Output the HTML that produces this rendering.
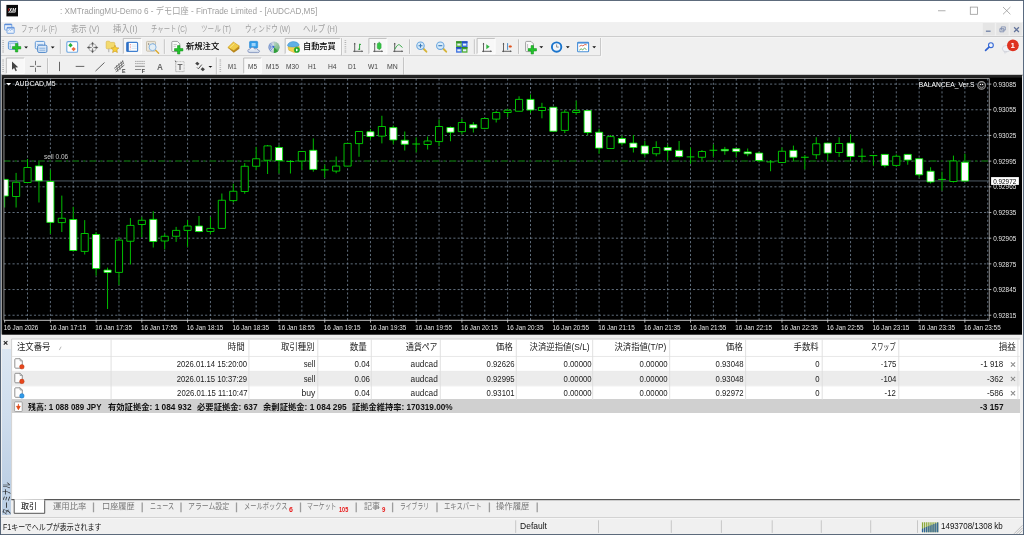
<!DOCTYPE html>
<html lang="ja"><head><meta charset="utf-8"><title>XMTradingMU-Demo 6</title>
<style>
html,body{margin:0;padding:0}
body{width:1024px;height:535px;overflow:hidden;background:#f0f0f0;position:relative;
 font-family:"Liberation Sans","Noto Sans CJK JP",sans-serif;font-size:8.5px;color:#000}
.a{position:absolute}
.t{position:absolute;white-space:nowrap;line-height:1}
</style></head><body><div id="win" style="position:absolute;left:0;top:0;width:1024px;height:535px;will-change:transform">
<svg width="1024" height="76" viewBox="0 0 1024 76" style="position:absolute;left:0;top:0">
<rect x="0" y="0" width="1024" height="22.3" fill="#fff"/>
<rect x="6.4" y="4.9" width="11.6" height="11.5" fill="#0a0a0a"/>
<path d="M8.5 8.3h1l-.5 2.4h-1z" fill="#d81818"/>
<text x="9.1" y="11.5" font-family="Liberation Sans, sans-serif" font-weight="bold" font-style="italic" font-size="5" fill="#fff" textLength="6.9" lengthAdjust="spacingAndGlyphs">XM</text>
<path d="M8.2 12.25h7.2" stroke="#c8c8c8" stroke-width="0.9"/>
<path d="M938 10.75h7.5" stroke="#9a9a9a" stroke-width="0.8"/>
<rect x="970.3" y="7.1" width="7.2" height="7.2" fill="none" stroke="#9a9a9a" stroke-width="0.8"/>
<path d="M1003 7l7.4 7.3M1010.4 7l-7.4 7.3" stroke="#9a9a9a" stroke-width="0.8"/>
<rect x="0" y="22.3" width="1024" height="14" fill="#f0f0f0"/>
<rect x="4.6" y="24" width="7.2" height="6" rx="0.6" fill="#eaf2fc" stroke="#6f9fe0" stroke-width="0.9"/><path d="M4.6 24.6h7.2" stroke="#5a8cd8" stroke-width="1.2"/>
<rect x="7" y="27.3" width="7.2" height="6" rx="0.6" fill="#eaf2fc" stroke="#6f9fe0" stroke-width="0.9"/><path d="M7 27.9h7.2" stroke="#5a8cd8" stroke-width="1.2"/>
<path d="M8.2 30.8l1.2-1.3 1.1 1 1.3-1.6 1.2 1.4" stroke="#6f9fe0" stroke-width="0.6" fill="none"/>
<rect x="982.8" y="23" width="12.0" height="12.3" fill="#e5e5e5"/>
<rect x="996.2" y="23" width="12.5" height="12.3" fill="#e5e5e5"/>
<rect x="1010.1" y="23" width="11.7" height="12.3" fill="#e5e5e5"/>
<path d="M985.9 31.2h4.7" stroke="#6f80a4" stroke-width="1.3"/>
<path d="M1001.3 26.9h4v3.2h-4zM999.9 28.6h4v3.2h-4z" fill="#e5e5e5" stroke="#7788ac" stroke-width="0.8"/>
<path d="M1014.1 27.2l4.8 4.8M1018.9 27.2l-4.8 4.8" stroke="#61729a" stroke-width="1.25"/>
<path d="M0 36.5H1024" stroke="#c2c2c2" stroke-width="0.9"/>
<path d="M0 37.3H1024" stroke="#f8f8f8" stroke-width="0.7"/>
<path d="M1 55.8H600.5V38" stroke="#c6c6c6" stroke-width="1" fill="none"/>
<path d="M1 56.8H601.4V38" stroke="#f9f9f9" stroke-width="0.8" fill="none"/>
<path d="M3.1 40.2V53.4" stroke="#b0b0b0" stroke-width="1.6" stroke-dasharray="0.8 1.1" fill="none"/>
<rect x="8.4" y="41.4" width="9.4" height="7.9" rx="1.3" fill="#e6f0fb" stroke="#5f97d6" stroke-width="1"/>
<path d="M8.6 43.2h9" stroke="#5f97d6" stroke-width="0.7"/><path d="M10.2 44.6v3.6" stroke="#4c86c8" stroke-width="0.9" stroke-dasharray="0.8 0.6"/>
<path d="M15.400000000000002 43.599999999999994h2.4v3.0h3.0v2.4h-3.0v3.0h-2.4v-3.0h-3.0v-2.4h3.0z" fill="#22c32a" stroke="#0d8a16" stroke-width="0.5"/>
<path d="M24.200000000000003 46.5h3.8l-1.9 1.9z" fill="#111"/>
<rect x="35.3" y="41.4" width="9.4" height="7.5" rx="1.2" fill="#e6f0fb" stroke="#5f97d6" stroke-width="1"/>
<path d="M37 44.4h6M37 46.6h6" stroke="#7aa6d8" stroke-width="0.6"/>
<rect x="37.7" y="45.2" width="9.2" height="7.2" rx="1.2" fill="#dce9f8" stroke="#4c86c8" stroke-width="1"/>
<path d="M39.3 48.2h6M39.3 50.2h6" stroke="#4c86c8" stroke-width="0.6"/>
<path d="M50.800000000000004 46.5h3.8l-1.9 1.9z" fill="#111"/>
<path d="M60.4 39.4V53.9" stroke="#b4b4b4" stroke-width="0.9" fill="none"/><path d="M61.199999999999996 39.4V53.9" stroke="#fafafa" stroke-width="0.7" fill="none"/>
<rect x="66.8" y="41.6" width="10.8" height="10.6" rx="1.3" fill="#fff" stroke="#6ea6e0" stroke-width="1.1"/>
<path d="M70.5 43.1l2.2 2.2-2.2 2.2-2.2-2.2z" fill="#27b23a"/>
<path d="M73.6 46.9l2.2 2.2-2.2 2.2-2.2-2.2z" fill="#ee6a3c"/>
<circle cx="92.55" cy="47.5" r="3.9" fill="none" stroke="#9c9c9c" stroke-width="0.7"/>
<path d="M92.55 41.9l1 2.2-.6 0-.4 2.6-.4-2.6-.6 0zM92.55 53.1l1-2.2-.6 0-.4-2.6-.4 2.6-.6 0zM86.95 47.5l2.2-1 0 .6 2.6.4-2.6.4 0 .6zM98.15 47.5l-2.2-1 0 .6-2.6.4 2.6.4 0 .6z" fill="#555" stroke="#555" stroke-width="0.3"/>
<path d="M106.2 42.2q0-1 1-1h2.2l1 1.2h3.4q1 0 1 1v4.4q0 1-1 1h-6.6q-1 0-1-1z" fill="#f3da6e" stroke="#d9b43c" stroke-width="0.6"/>
<path d="M108.8 48.8v3.4" stroke="#aaa" stroke-width="1"/>
<path d="M115 45.2l1.15 2.5 2.7.3-2 1.85.55 2.7-2.4-1.35-2.4 1.35.55-2.7-2-1.85 2.7-.3z" fill="#f7d038" stroke="#c9971c" stroke-width="0.6"/>
<rect x="123.3" y="38.4" width="18.10000000000001" height="15.5" fill="#f8f8f8"/><path d="M123.3 53.9V38.4H141.4" stroke="#b0b0b0" stroke-width="0.8" fill="none"/><path d="M123.3 53.9H141.4V38.4" stroke="#ffffff" stroke-width="0.8" fill="none"/>
<rect x="126.7" y="42.4" width="10.9" height="9" rx="1" fill="#fff" stroke="#3f7fd0" stroke-width="1.1"/>
<rect x="126.7" y="42.4" width="2.1" height="9" fill="#2f6fc4"/>
<path d="M131.5 45h5.4M131.5 46.8h5.4M131.5 48.6h5.4" stroke="#c8dcf4" stroke-width="0.7"/>
<path d="M130.4 44v5.4" stroke="#e24a4a" stroke-width="0.7" stroke-dasharray="0.8 0.9"/>
<rect x="146.5" y="41.4" width="9" height="9.8" rx="0.8" fill="#ece6d8" stroke="#b8ae98" stroke-width="0.7"/>
<path d="M148.6 43v2M153 43v2" stroke="#777" stroke-width="0.7"/>
<path d="M155.4 50l3.2 3.2" stroke="#dcaa30" stroke-width="1.5" stroke-linecap="round"/>
<circle cx="152.6" cy="47.2" r="3.5" fill="#e2effa" fill-opacity="0.85" stroke="#86b6e4" stroke-width="1"/>
<path d="M164.4 39.4V53.9" stroke="#b4b4b4" stroke-width="0.9" fill="none"/><path d="M165.20000000000002 39.4V53.9" stroke="#fafafa" stroke-width="0.7" fill="none"/>
<path d="M171.8 42.4q0-1 1-1h4.6l2.4 2.4v6.8q0 1-1 1h-6q-1 0-1-1z" fill="#fafafa" stroke="#8a8a8a" stroke-width="0.8"/>
<path d="M173.5 44.5h3.4M173.5 46.3h2.4" stroke="#aaa" stroke-width="0.6"/>
<path d="M177.5 45.599999999999994h2.4v3.0h3.0v2.4h-3.0v3.0h-2.4v-3.0h-3.0v-2.4h3.0z" fill="#22c32a" stroke="#0d8a16" stroke-width="0.5"/>
<path d="M227.8 47.8l5.6-5.6 6 4v2.6l-5.6 4z" fill="#b8861c"/>
<path d="M227.8 47.4l5.6-5.4 6 4-5.6 4.6z" fill="#f0cc48" stroke="#c99a24" stroke-width="0.5"/>
<path d="M230 47.6l4.4-4" stroke="#fbe68a" stroke-width="0.9"/>
<rect x="249.5" y="41.3" width="8.2" height="6.9" rx="1" fill="#2f9be8" stroke="#1f7fd0" stroke-width="0.5"/>
<rect x="251.6" y="43" width="4" height="3.2" fill="#9fd4fb"/>
<path d="M250 52.6q-2.3 0-2.2-1.9.2-1.7 2.2-1.6.6-1.9 2.6-1.7 1.7.2 2.1 1.6 2.6-1.2 3.2 1 1.9.3 1.6 1.6-.3 1-1.8 1z" fill="url(#cg)" stroke="#8496be" stroke-width="0.9"/>
<defs><radialGradient id="sg"><stop offset="0" stop-color="#f4f6f8"/><stop offset="1" stop-color="#b9c5d4"/></radialGradient><linearGradient id="gg" x1="0" y1="0" x2="0" y2="1"><stop offset="0" stop-color="#9fd0a4" stop-opacity="0.35"/><stop offset="1" stop-color="#3aa644" stop-opacity="0.9"/></linearGradient><linearGradient id="cg" x1="0" y1="0" x2="0" y2="1"><stop offset="0" stop-color="#ffffff"/><stop offset="1" stop-color="#c6d2e6"/></linearGradient></defs>
<circle cx="273.9" cy="47.2" r="5.7" fill="url(#sg)"/>
<path d="M273.9 41.5A5.7 5.7 0 0 1 273.9 52.900000000000006z" fill="url(#gg)"/>
<path d="M273.9 47.2L278.50 50.50A5.7 5.7 0 0 1 273.9 52.900000000000006z" fill="#2f9e38"/>
<path d="M272.70 48.92A2.1 2.1 0 0 1 272.70 45.48 M271.89 50.07A3.5 3.5 0 0 1 271.89 44.33 M271.09 51.21A4.9 4.9 0 0 1 271.09 43.19" stroke="#5a7fd0" stroke-width="0.75" fill="none"/>
<path d="M274.95 45.38A2.1 2.1 0 0 1 275.25 48.81 M275.65 44.17A3.5 3.5 0 0 1 276.15 49.88 M276.35 42.96A4.9 4.9 0 0 1 277.05 50.95" stroke="#7fb88a" stroke-width="0.6" fill="none"/>
<circle cx="273.4" cy="46.800000000000004" r="1.15" fill="#3a68d0"/>
<rect x="285.2" y="38.4" width="55.10000000000002" height="15.5" fill="#f8f8f8"/><path d="M285.2 53.9V38.4H340.3" stroke="#b0b0b0" stroke-width="0.8" fill="none"/><path d="M285.2 53.9H340.3V38.4" stroke="#ffffff" stroke-width="0.8" fill="none"/>
<path d="M288 47l1.8-3.2h7.8l1.8 3.2-.4 3.6-4.4 2.2-5.8-2.6z" fill="#f2d24c" stroke="#cfa62a" stroke-width="0.5"/>
<path d="M287.4 45.6q.8-3.6 5.6-4 4.6-.2 6.2 3.2.4 1.8-5.8 2.2-5.6.2-6-1.4z" fill="#5fb0e6" stroke="#3a8ccc" stroke-width="0.5"/>
<circle cx="296.9" cy="49.9" r="2.7" fill="#22b02e" stroke="#128a1c" stroke-width="0.4"/>
<path d="M296 48.4l2.3 1.5-2.3 1.5z" fill="#fff"/>
<path d="M341.6 38.2V55.2" stroke="#b4b4b4" stroke-width="0.9" fill="none"/><path d="M342.40000000000003 38.2V55.2" stroke="#fafafa" stroke-width="0.7" fill="none"/>
<path d="M345.4 40.2V53.4" stroke="#b0b0b0" stroke-width="1.6" stroke-dasharray="0.8 1.1" fill="none"/>
<path d="M354.7 43.1V52.099999999999994M353.2 51.3H362.6" stroke="#555" stroke-width="0.9" fill="none"/><path d="M353.7 44.300000000000004l1 -1.6l1 1.6zM361.6 50.3l1.6 1l-1.6 1z" fill="#555"/>
<path d="M359.6 43.8v6.2M359.6 44.4h1.4M358.2 49.2h1.4" stroke="#2aa33a" stroke-width="1"/>
<rect x="368.9" y="38.4" width="18.0" height="15.5" fill="#f8f8f8"/><path d="M368.9 53.9V38.4H386.9" stroke="#b0b0b0" stroke-width="0.8" fill="none"/><path d="M368.9 53.9H386.9V38.4" stroke="#ffffff" stroke-width="0.8" fill="none"/>
<path d="M374.7 43.1V52.099999999999994M373.2 51.3H382.5" stroke="#555" stroke-width="0.9" fill="none"/><path d="M373.7 44.300000000000004l1 -1.6l1 1.6zM381.5 50.3l1.6 1l-1.6 1z" fill="#555"/>
<path d="M379.2 41.8v8.2" stroke="#2aa33a" stroke-width="0.9"/><rect x="377.3" y="43.2" width="3.8" height="5.5" rx="0.8" fill="#35c545" stroke="#1f9a30" stroke-width="0.5"/>
<path d="M394.7 43.1V52.099999999999994M393.2 51.3H402.6" stroke="#555" stroke-width="0.9" fill="none"/><path d="M393.7 44.300000000000004l1 -1.6l1 1.6zM401.6 50.3l1.6 1l-1.6 1z" fill="#555"/>
<path d="M394.8 49.2q3-5.4 4.6-4.4t3 2.8" stroke="#2aa33a" stroke-width="0.9" fill="none"/>
<path d="M409.5 39.4V53.9" stroke="#b4b4b4" stroke-width="0.9" fill="none"/><path d="M410.3 39.4V53.9" stroke="#fafafa" stroke-width="0.7" fill="none"/>
<path d="M423.3 48.5L426.4 51.7" stroke="#d6b43a" stroke-width="1.9" stroke-linecap="round"/><circle cx="420.5" cy="45.7" r="3.7" fill="#d8ecfa" stroke="#6ba6de" stroke-width="1.1"/><path d="M418.5 45.7h4M420.5 43.7v4" stroke="#3a78b8" stroke-width="1.1"/>
<path d="M443.1 48.5L446.2 51.7" stroke="#d6b43a" stroke-width="1.9" stroke-linecap="round"/><circle cx="440.3" cy="45.7" r="3.7" fill="#d8ecfa" stroke="#6ba6de" stroke-width="1.1"/><path d="M438.3 45.7h4" stroke="#3a78b8" stroke-width="1.1"/>
<rect x="456.1" y="41.3" width="5.7" height="5.7" fill="#52b03c"/>
<rect x="456.1" y="41.3" width="5.7" height="1.5" fill="#2f8a22"/>
<rect x="457.3" y="43.599999999999994" width="3.3" height="2" fill="#e8f0fb"/>
<rect x="461.8" y="41.3" width="5.7" height="5.7" fill="#3a6fe0"/>
<rect x="461.8" y="41.3" width="5.7" height="1.5" fill="#1f48b8"/>
<rect x="463.0" y="43.599999999999994" width="3.3" height="2" fill="#e8f0fb"/>
<rect x="456.1" y="47" width="5.7" height="5.7" fill="#3a6fe0"/>
<rect x="456.1" y="47" width="5.7" height="1.5" fill="#1f48b8"/>
<rect x="457.3" y="49.3" width="3.3" height="2" fill="#e8f0fb"/>
<rect x="461.8" y="47" width="5.7" height="5.7" fill="#52b03c"/>
<rect x="461.8" y="47" width="5.7" height="1.5" fill="#2f8a22"/>
<rect x="463.0" y="49.3" width="3.3" height="2" fill="#e8f0fb"/>
<path d="M474.4 39.4V53.9" stroke="#b4b4b4" stroke-width="0.9" fill="none"/><path d="M475.2 39.4V53.9" stroke="#fafafa" stroke-width="0.7" fill="none"/>
<rect x="477.1" y="38.4" width="18.0" height="15.5" fill="#f8f8f8"/><path d="M477.1 53.9V38.4H495.1" stroke="#b0b0b0" stroke-width="0.8" fill="none"/><path d="M477.1 53.9H495.1V38.4" stroke="#ffffff" stroke-width="0.8" fill="none"/>
<path d="M483.5 43.1V52.099999999999994M482.0 51.3H491.4" stroke="#555" stroke-width="0.9" fill="none"/><path d="M482.5 44.300000000000004l1 -1.6l1 1.6zM490.4 50.3l1.6 1l-1.6 1z" fill="#555"/>
<path d="M486.3 44.2l3.4 2.5-3.4 2.5z" fill="#35b545"/>
<path d="M503.5 43.1V52.099999999999994M502.0 51.3H511.2" stroke="#555" stroke-width="0.9" fill="none"/><path d="M502.5 44.300000000000004l1 -1.6l1 1.6zM510.2 50.3l1.6 1l-1.6 1z" fill="#555"/>
<path d="M507.6 43.1v6.8" stroke="#3a80c0" stroke-width="0.9"/>
<path d="M508.4 46.5l2-1.7v1h1.4v1.4h-1.4v1z" fill="#e0521c"/>
<path d="M518.5 39.4V53.9" stroke="#b4b4b4" stroke-width="0.9" fill="none"/><path d="M519.3 39.4V53.9" stroke="#fafafa" stroke-width="0.7" fill="none"/>
<path d="M525.6 42.4q0-1 1-1h4.4l2.4 2.4v6.8q0 1-1 1h-5.8q-1 0-1-1z" fill="#fafafa" stroke="#8a8a8a" stroke-width="0.8"/>
<path d="M527.6 44v4.5" stroke="#999" stroke-width="0.6"/>
<path d="M531.0999999999999 45.599999999999994h2.4v3.0h3.0v2.4h-3.0v3.0h-2.4v-3.0h-3.0v-2.4h3.0z" fill="#22c32a" stroke="#0d8a16" stroke-width="0.5"/>
<path d="M539.4 46.3h3.8l-1.9 1.9z" fill="#111"/>
<circle cx="556.6" cy="47.1" r="4.7" fill="#f2f6fb" stroke="#1a74cc" stroke-width="1.9"/>
<path d="M556.6 44.4v2.7h2.1" stroke="#666" stroke-width="0.7" fill="none"/>
<path d="M565.9 46.3h3.8l-1.9 1.9z" fill="#111"/>
<rect x="577.6" y="42.4" width="11" height="9.4" rx="0.8" fill="#fff" stroke="#4a90d8" stroke-width="1.1"/>
<path d="M577.6 42.9h11" stroke="#4a90d8" stroke-width="1.4"/>
<path d="M579.3 46.3l2-1 1.6.6 2-1.4 1.8.4" stroke="#d0482c" stroke-width="0.8" fill="none"/>
<path d="M579.3 50.2l1.8-1.4 1.6 1 1.8-1.6 2 1.4" stroke="#3a9a3a" stroke-width="0.8" fill="none"/>
<path d="M592.3000000000001 46.3h3.8l-1.9 1.9z" fill="#111"/>
<circle cx="990.9" cy="45.2" r="2.4" fill="#eef4fc" stroke="#3568d4" stroke-width="1.1"/>
<path d="M989 47.1l-3.4 3.2" stroke="#2f62d0" stroke-width="1.7" stroke-linecap="round"/>
<ellipse cx="1006.3" cy="48.7" rx="3.9" ry="3.2" fill="#f1f3f7" stroke="#c2c6ce" stroke-width="0.6"/><path d="M1004.2 51.2l.6 2.2 2.2-1.9z" fill="#e4e6ea" stroke="#c2c6ce" stroke-width="0.4"/>
<circle cx="1012.9" cy="45.3" r="5.9" fill="#de3220"/>
<text x="1012.8" y="48.3" font-family="Liberation Sans, sans-serif" font-weight="bold" font-size="8" fill="#fff" text-anchor="middle">1</text>
<path d="M3.1 59.6V72.6" stroke="#b0b0b0" stroke-width="1.6" stroke-dasharray="0.8 1.1" fill="none"/>
<rect x="6.35" y="58" width="17.950000000000003" height="15.400000000000006" fill="#f8f8f8"/><path d="M6.35 73.4V58H24.3" stroke="#b0b0b0" stroke-width="0.8" fill="none"/><path d="M6.35 73.4H24.3V58" stroke="#ffffff" stroke-width="0.8" fill="none"/>
<path d="M12 61.4v8.4l2.1-1.9 1.5 3.3 1.3-.6-1.5-3.2 2.8-.2z" fill="#444"/>
<path d="M35.5 60.8v4.4M35.5 67.6v4.4M29.9 66.4h4.4M36.7 66.4h4.4" stroke="#5c5c5c" stroke-width="0.85"/>
<path d="M47.5 58.3V73.4" stroke="#b4b4b4" stroke-width="0.9" fill="none"/><path d="M48.3 58.3V73.4" stroke="#fafafa" stroke-width="0.7" fill="none"/>
<path d="M59.5 61.8v9.3" stroke="#555" stroke-width="0.9"/>
<path d="M75.7 66.4h8.6" stroke="#555" stroke-width="0.9"/>
<path d="M95.5 71.1l9-8.6" stroke="#555" stroke-width="0.9"/>
<path d="M114.2 68.4l8.8-7.2M115 70.2l8.8-7.2M115.8 72l8.6-7" stroke="#505050" stroke-width="0.75"/>
<path d="M116.4 65.2l1.6 6.4M118.6 63.4l1.6 6.4M120.8 61.6l1.4 5.6M122.6 60.2l.8 3.6" stroke="#505050" stroke-width="0.65"/>
<text x="121.9" y="73" font-family="Liberation Sans, sans-serif" font-weight="bold" font-size="5.3" fill="#444">E</text>
<path d="M135 61.4h9.8M135 63.6h9.8" stroke="#8a8a8a" stroke-width="0.7" stroke-dasharray="1.6 0.5"/>
<path d="M135 66.3h9.8M135 69.5h6.2" stroke="#707070" stroke-width="0.8"/>
<text x="141.7" y="73" font-family="Liberation Sans, sans-serif" font-weight="bold" font-size="5.3" fill="#444">F</text>
<text x="157" y="69.9" font-family="Liberation Sans, sans-serif" font-weight="bold" font-size="9" fill="#666" textLength="5.9" lengthAdjust="spacingAndGlyphs">A</text>
<rect x="175.7" y="61.6" width="8.4" height="10" fill="none" stroke="#999" stroke-width="0.6" stroke-dasharray="0.9 0.6"/>
<path d="M175.7 71.6V61.6M175.7 71.6h8.4" stroke="#bdbdbd" stroke-width="0.6" fill="none"/>
<path d="M174.9 60.8l1.4 1" stroke="#333" stroke-width="0.8"/>
<text x="179.95" y="70.3" font-family="Liberation Sans, sans-serif" font-weight="bold" font-size="8.2" fill="#6a6a6a" text-anchor="middle">T</text>
<path d="M195.2 63.6l2-1.9 2.3 2-2 1.9zM200.6 69.2l2-1.9 2.3 2-2 1.9z" fill="#444"/>
<path d="M197 67.4l1.4 1.4 3.4-4.2" stroke="#444" stroke-width="0.9" fill="none"/>
<path d="M208.5 65.9h3.8l-1.9 1.9z" fill="#111"/>
<path d="M216.4 57.4V74.6" stroke="#b4b4b4" stroke-width="0.9" fill="none"/><path d="M217.20000000000002 57.4V74.6" stroke="#fafafa" stroke-width="0.7" fill="none"/>
<path d="M220.3 59.6V72.6" stroke="#b0b0b0" stroke-width="1.6" stroke-dasharray="0.8 1.1" fill="none"/>
<rect x="243.7" y="58" width="17.600000000000023" height="15.400000000000006" fill="#f8f8f8"/><path d="M243.7 73.4V58H261.3" stroke="#b0b0b0" stroke-width="0.8" fill="none"/><path d="M243.7 73.4H261.3V58" stroke="#ffffff" stroke-width="0.8" fill="none"/>
<path d="M403.6 57.4V74.6" stroke="#b4b4b4" stroke-width="0.9" fill="none"/><path d="M404.40000000000003 57.4V74.6" stroke="#fafafa" stroke-width="0.7" fill="none"/>
</svg>
<div class="t" id="t1" style="font-size:8.6px;color:#a0a0a0;top:7.10px;left:60.10px;transform-origin:0 50%;transform:scaleX(0.9542);">: XMTradingMU-Demo 6 - デモ口座 - FinTrade Limited - [AUDCAD,M5]</div>
<div class="t" id="t2" style="font-size:8.6px;color:#a0a0a0;top:24.90px;left:21.00px;transform-origin:0 50%;transform:scaleX(0.7518);">ファイル (F)</div>
<div class="t" id="t3" style="font-size:8.6px;color:#a0a0a0;top:24.90px;left:71.00px;transform-origin:0 50%;transform:scaleX(0.9152);">表示 (V)</div>
<div class="t" id="t4" style="font-size:8.6px;color:#a0a0a0;top:24.90px;left:113.10px;transform-origin:0 50%;transform:scaleX(0.9640);">挿入(I)</div>
<div class="t" id="t5" style="font-size:8.6px;color:#a0a0a0;top:24.90px;left:151.00px;transform-origin:0 50%;transform:scaleX(0.7385);">チャート (C)</div>
<div class="t" id="t6" style="font-size:8.6px;color:#a0a0a0;top:24.90px;left:200.60px;transform-origin:0 50%;transform:scaleX(0.7662);">ツール (T)</div>
<div class="t" id="t7" style="font-size:8.6px;color:#a0a0a0;top:24.90px;left:244.75px;transform-origin:0 50%;transform:scaleX(0.7643);">ウィンドウ (W)</div>
<div class="t" id="t8" style="font-size:8.6px;color:#a0a0a0;top:24.90px;left:303.10px;transform-origin:0 50%;transform:scaleX(0.8577);">ヘルプ (H)</div>
<div class="t" id="t9" style="font-size:8.4px;color:#000;top:42.30px;left:185.60px;transform-origin:0 50%;transform:scaleX(0.9910);font-weight:500;-webkit-text-stroke:0">新規注文</div>
<div class="t" id="t10" style="font-size:8.4px;color:#000;top:42.30px;left:303.30px;transform-origin:0 50%;transform:scaleX(0.9761);font-weight:500;">自動売買</div>
<div class="t" id="t11" style="font-size:6.6px;color:#444;top:64.40px;left:228.00px;transform-origin:0 50%;transform:scaleX(0.9376);">M1</div>
<div class="t" id="t12" style="font-size:6.6px;color:#444;top:64.40px;left:247.80px;transform-origin:0 50%;transform:scaleX(0.9813);">M5</div>
<div class="t" id="t13" style="font-size:6.6px;color:#444;top:64.40px;left:266.10px;transform-origin:0 50%;transform:scaleX(0.9978);">M15</div>
<div class="t" id="t14" style="font-size:6.6px;color:#444;top:64.40px;left:286.10px;transform-origin:0 50%;transform:scaleX(0.9978);">M30</div>
<div class="t" id="t15" style="font-size:6.6px;color:#444;top:64.40px;left:308.20px;transform-origin:0 50%;transform:scaleX(0.9837);">H1</div>
<div class="t" id="t16" style="font-size:6.6px;color:#444;top:64.40px;left:327.80px;transform-origin:0 50%;transform:scaleX(1.0193);">H4</div>
<div class="t" id="t17" style="font-size:6.6px;color:#444;top:64.40px;left:348.40px;transform-origin:0 50%;transform:scaleX(0.9719);">D1</div>
<div class="t" id="t18" style="font-size:6.6px;color:#444;top:64.40px;left:368.00px;transform-origin:0 50%;transform:scaleX(1.0111);">W1</div>
<div class="t" id="t19" style="font-size:6.6px;color:#444;top:64.40px;left:386.90px;transform-origin:0 50%;transform:scaleX(1.0521);">MN</div>
<svg id="chart" width="1024" height="262" viewBox="0 74 1024 262" style="position:absolute;left:0;top:74px">
<rect x="0.8" y="74.6" width="1022" height="1.2" fill="#8a8a8a"/>
<rect x="2.05" y="75.3" width="1020.1" height="259.4" fill="#000"/>
<rect x="2.05" y="75.3" width="1020.1" height="2.3" fill="#232323"/>
<path d="M3.95 84.10H989.3 M3.95 109.78H989.3 M3.95 135.46H989.3 M3.95 161.14H989.3 M3.95 186.82H989.3 M3.95 212.50H989.3 M3.95 238.18H989.3 M3.95 263.86H989.3 M3.95 289.54H989.3 M3.95 315.22H989.3 M27.53 78.45V320.3 M50.39 78.45V320.3 M73.26 78.45V320.3 M96.12 78.45V320.3 M118.98 78.45V320.3 M141.84 78.45V320.3 M164.70 78.45V320.3 M187.57 78.45V320.3 M210.43 78.45V320.3 M233.29 78.45V320.3 M256.15 78.45V320.3 M279.01 78.45V320.3 M301.88 78.45V320.3 M324.74 78.45V320.3 M347.60 78.45V320.3 M370.46 78.45V320.3 M393.32 78.45V320.3 M416.19 78.45V320.3 M439.05 78.45V320.3 M461.91 78.45V320.3 M484.77 78.45V320.3 M507.63 78.45V320.3 M530.50 78.45V320.3 M553.36 78.45V320.3 M576.22 78.45V320.3 M599.08 78.45V320.3 M621.94 78.45V320.3 M644.81 78.45V320.3 M667.67 78.45V320.3 M690.53 78.45V320.3 M713.39 78.45V320.3 M736.25 78.45V320.3 M759.12 78.45V320.3 M781.98 78.45V320.3 M804.84 78.45V320.3 M827.70 78.45V320.3 M850.56 78.45V320.3 M873.43 78.45V320.3 M896.29 78.45V320.3 M919.15 78.45V320.3 M942.01 78.45V320.3 M964.87 78.45V320.3 M987.74 78.45V320.3" stroke="#778899" stroke-width="0.8" stroke-dasharray="2.14 2.14" fill="none"/>
<path d="M3.95 180.95H989.3" stroke="#5d6b78" stroke-width="0.85" fill="none"/>
<path d="M3.95 161H992.3" stroke="#000" stroke-width="1.5" stroke-dasharray="6.43 4.29 2.14 4.29" fill="none"/>
<path d="M3.95 161H992.3" stroke="#109410" stroke-width="0.95" stroke-dasharray="6.43 4.29 2.14 4.29" fill="none"/>
<clipPath id="cc"><rect x="3.95" y="78.45" width="985.3499999999999" height="241.85000000000002"/></clipPath>
<g clip-path="url(#cc)">
<path d="M4.67 179.4V207.5 M16.10 172.9V207.5 M27.53 159.0V182.5 M38.96 161.0V202.5 M50.39 169.75V233.9 M61.82 195.6V232.0 M73.26 206.9V251.4 M84.69 220.1V254.5 M96.12 232.0V275.7 M107.55 267.6V309.0 M118.98 237.2V285.0 M130.41 218.1V264.5 M141.84 216.9V237.25 M153.27 211.25V247.5 M164.70 233.75V249.4 M176.13 226.9V241.9 M187.57 220.0V246.9 M199.00 216.0V232.25 M210.43 216.9V234.4 M221.86 193.5V228.75 M233.29 183.75V202.5 M244.72 163.1V193.75 M256.15 146.9V169.75 M267.58 145.0V174.0 M279.01 145.0V173.5 M290.44 160.0V173.5 M301.88 151.5V169.75 M313.31 138.4V171.7 M324.74 164.7V177.8 M336.17 156.5V173.25 M347.60 143.4V166.1 M359.03 131.5V156.75 M370.46 129.0V139.5 M381.89 115.75V143.4 M393.32 125.5V144.25 M404.75 131.5V150.5 M416.19 137.4V152.4 M427.62 136.5V149.5 M439.05 119.4V146.25 M450.48 126.5V141.25 M461.91 118.75V134.4 M473.34 122.1V132.5 M484.77 118.5V128.4 M496.20 111.0V122.5 M507.63 108.75V117.25 M519.06 96.25V111.25 M530.50 94.4V113.1 M541.93 102.8V118.3 M553.36 107.25V131.25 M564.79 110.0V133.1 M576.22 100.6V114.75 M587.65 110.6V135.25 M599.08 128.75V153.75 M610.51 135.0V148.5 M621.94 135.6V145.6 M633.37 135.0V152.5 M644.81 141.0V156.5 M656.24 141.25V156.25 M667.67 144.4V160.6 M679.10 141.0V157.5 M690.53 147.5V163.75 M701.96 150.0V161.6 M713.39 144.4V156.9 M724.82 146.9V154.75 M736.25 148.0V156.9 M747.68 148.5V156.25 M759.12 151.9V162.5 M770.55 160.0V171.25 M781.98 147.5V162.5 M793.41 145.6V161.25 M804.84 155.0V169.4 M816.27 137.25V159.0 M827.70 143.1V161.25 M839.13 137.25V156.9 M850.56 134.4V161.25 M861.99 148.5V162.5 M873.43 155.6V165.6 M884.86 154.4V167.5 M896.29 154.4V166.9 M907.72 154.4V164.75 M919.15 158.75V177.5 M930.58 167.25V183.5 M942.01 171.6V190.6 M953.44 155.6V182.5 M964.87 153.75V181.5" stroke="#000" stroke-width="1.5" fill="none"/>
<path d="M4.67 179.4V207.5 M16.10 172.9V207.5 M27.53 159.0V182.5 M38.96 161.0V202.5 M50.39 169.75V233.9 M61.82 195.6V232.0 M73.26 206.9V251.4 M84.69 220.1V254.5 M96.12 232.0V275.7 M107.55 267.6V309.0 M118.98 237.2V285.0 M130.41 218.1V264.5 M141.84 216.9V237.25 M153.27 211.25V247.5 M164.70 233.75V249.4 M176.13 226.9V241.9 M187.57 220.0V246.9 M199.00 216.0V232.25 M210.43 216.9V234.4 M221.86 193.5V228.75 M233.29 183.75V202.5 M244.72 163.1V193.75 M256.15 146.9V169.75 M267.58 145.0V174.0 M279.01 145.0V173.5 M290.44 160.0V173.5 M301.88 151.5V169.75 M313.31 138.4V171.7 M324.74 164.7V177.8 M336.17 156.5V173.25 M347.60 143.4V166.1 M359.03 131.5V156.75 M370.46 129.0V139.5 M381.89 115.75V143.4 M393.32 125.5V144.25 M404.75 131.5V150.5 M416.19 137.4V152.4 M427.62 136.5V149.5 M439.05 119.4V146.25 M450.48 126.5V141.25 M461.91 118.75V134.4 M473.34 122.1V132.5 M484.77 118.5V128.4 M496.20 111.0V122.5 M507.63 108.75V117.25 M519.06 96.25V111.25 M530.50 94.4V113.1 M541.93 102.8V118.3 M553.36 107.25V131.25 M564.79 110.0V133.1 M576.22 100.6V114.75 M587.65 110.6V135.25 M599.08 128.75V153.75 M610.51 135.0V148.5 M621.94 135.6V145.6 M633.37 135.0V152.5 M644.81 141.0V156.5 M656.24 141.25V156.25 M667.67 144.4V160.6 M679.10 141.0V157.5 M690.53 147.5V163.75 M701.96 150.0V161.6 M713.39 144.4V156.9 M724.82 146.9V154.75 M736.25 148.0V156.9 M747.68 148.5V156.25 M759.12 151.9V162.5 M770.55 160.0V171.25 M781.98 147.5V162.5 M793.41 145.6V161.25 M804.84 155.0V169.4 M816.27 137.25V159.0 M827.70 143.1V161.25 M839.13 137.25V156.9 M850.56 134.4V161.25 M861.99 148.5V162.5 M873.43 155.6V165.6 M884.86 154.4V167.5 M896.29 154.4V166.9 M907.72 154.4V164.75 M919.15 158.75V177.5 M930.58 167.25V183.5 M942.01 171.6V190.6 M953.44 155.6V182.5 M964.87 153.75V181.5" stroke="#00e000" stroke-width="0.85" fill="none"/>
<path d="M286.57 161.5H294.31 M320.87 169.9H328.61 M412.32 144.0H420.06 M686.66 156.9H694.40 M709.52 150.25H717.26 M766.68 161.9H774.42 M800.97 157.25H808.71 M858.12 156.25H865.86 M869.56 155.6H877.30 M938.14 179.4H945.88" stroke="#00e000" stroke-width="0.95" fill="none"/>
<path d="M12.53 182.25H19.67V196.5H12.53Z M23.96 167.5H31.10V182.5H23.96Z M58.25 218.25H65.39V222.6H58.25Z M81.12 233.5H88.26V251.4H81.12Z M115.41 240.1H122.55V272.4H115.41Z M126.84 225.4H133.98V241.25H126.84Z M138.27 220.25H145.41V224.5H138.27Z M161.13 236.25H168.27V241.0H161.13Z M172.56 230.4H179.70V236.25H172.56Z M184.00 226.0H191.14V230.4H184.00Z M206.86 228.4H214.00V231.5H206.86Z M218.29 200.25H225.43V228.4H218.29Z M229.72 191.25H236.86V200.6H229.72Z M241.15 166.25H248.29V191.5H241.15Z M252.58 158.75H259.72V166.25H252.58Z M264.01 145.9H271.15V160.25H264.01Z M298.31 151.5H305.45V161.0H298.31Z M332.60 166.1H339.74V171.1H332.60Z M344.03 143.4H351.17V166.1H344.03Z M355.46 131.5H362.60V143.6H355.46Z M378.32 126.5H385.46V136.1H378.32Z M424.05 141.0H431.19V144.5H424.05Z M435.48 126.5H442.62V141.6H435.48Z M458.34 122.5H465.48V131.6H458.34Z M481.20 118.5H488.34V128.4H481.20Z M492.63 112.5H499.77V119.1H492.63Z M504.06 110.25H511.20V112.5H504.06Z M515.49 99.4H522.63V111.25H515.49Z M538.36 107.4H545.50V110.5H538.36Z M561.22 112.25H568.36V130.4H561.22Z M572.65 110.6H579.79V112.5H572.65Z M606.94 136.6H614.08V148.5H606.94Z M652.67 147.5H659.81V153.75H652.67Z M698.39 151.5H705.53V157.25H698.39Z M778.41 151.25H785.55V162.5H778.41Z M812.70 143.75H819.84V154.75H812.70Z M835.56 143.5H842.70V152.5H835.56Z M892.72 156.25H899.86V165.4H892.72Z M949.87 161.0H957.01V181.5H949.87Z" stroke="#00e000" stroke-width="0.85" fill="#000"/>
<path d="M1.10 179.4H8.24V196.0H1.10Z M35.39 165.9H42.53V180.9H35.39Z M46.82 181.5H53.96V222.4H46.82Z M69.69 219.5H76.83V250.5H69.69Z M92.55 234.5H99.69V268.6H92.55Z M103.98 270.1H111.12V272.4H103.98Z M149.70 219.4H156.84V241.5H149.70Z M195.43 226.0H202.57V231.5H195.43Z M275.44 147.5H282.58V160.6H275.44Z M309.74 150.3H316.88V169.4H309.74Z M366.89 131.75H374.03V136.5H366.89Z M389.75 127.6H396.89V139.9H389.75Z M401.19 140.25H408.32V144.25H401.19Z M446.91 127.5H454.05V132.25H446.91Z M469.77 124.75H476.91V127.9H469.77Z M526.93 99.4H534.07V110.0H526.93Z M549.79 107.25H556.93V131.25H549.79Z M584.08 110.6H591.22V132.5H584.08Z M595.51 132.25H602.65V148.1H595.51Z M618.37 138.5H625.51V143.1H618.37Z M629.80 143.1H636.94V147.5H629.80Z M641.24 145.9H648.38V153.75H641.24Z M664.10 147.5H671.24V150.4H664.10Z M675.53 150.4H682.67V156.6H675.53Z M721.25 149.4H728.39V150.8H721.25Z M732.68 148.75H739.82V151.6H732.68Z M744.11 151.9H751.25V153.75H744.11Z M755.55 153.1H762.69V160.6H755.55Z M789.84 150.4H796.98V157.25H789.84Z M824.13 143.1H831.27V153.1H824.13Z M846.99 143.1H854.13V156.5H846.99Z M881.29 154.4H888.43V165.4H881.29Z M904.15 154.4H911.29V160.0H904.15Z M915.58 158.75H922.72V174.75H915.58Z M927.01 171.25H934.15V181.9H927.01Z M961.30 162.25H968.44V181.0H961.30Z" stroke="#00f000" stroke-width="0.85" fill="#fff"/>
</g>
<path d="M3.95 320.3V78.45H989.3V320.3" stroke="#b4b4b4" stroke-width="0.8" fill="none"/>
<path d="M3.95 320.3H989.3" stroke="#d8d8d8" stroke-width="0.9" fill="none"/>
<path d="M4.67 320.3v2.3 M50.39 320.3v2.3 M96.12 320.3v2.3 M141.84 320.3v2.3 M187.57 320.3v2.3 M233.29 320.3v2.3 M279.01 320.3v2.3 M324.74 320.3v2.3 M370.46 320.3v2.3 M416.19 320.3v2.3 M461.91 320.3v2.3 M507.63 320.3v2.3 M553.36 320.3v2.3 M599.08 320.3v2.3 M644.81 320.3v2.3 M690.53 320.3v2.3 M736.25 320.3v2.3 M781.98 320.3v2.3 M827.70 320.3v2.3 M873.43 320.3v2.3 M919.15 320.3v2.3 M964.87 320.3v2.3 M989.3 84.10h2 M989.3 109.78h2 M989.3 135.46h2 M989.3 161.14h2 M989.3 186.82h2 M989.3 212.50h2 M989.3 238.18h2 M989.3 263.86h2 M989.3 289.54h2 M989.3 315.22h2" stroke="#e0e0e0" stroke-width="0.8" fill="none"/>
<g font-family="Liberation Sans, Arial, sans-serif" fill="#fff">
<text x="993.2" y="86.75" font-size="6.8" fill="#e6e6e6" textLength="23.1" lengthAdjust="spacingAndGlyphs">0.93085</text>
<text x="993.2" y="112.43" font-size="6.8" fill="#e6e6e6" textLength="23.1" lengthAdjust="spacingAndGlyphs">0.93055</text>
<text x="993.2" y="138.11" font-size="6.8" fill="#e6e6e6" textLength="23.1" lengthAdjust="spacingAndGlyphs">0.93025</text>
<text x="993.2" y="163.79" font-size="6.8" fill="#e6e6e6" textLength="23.1" lengthAdjust="spacingAndGlyphs">0.92995</text>
<text x="993.2" y="189.47" font-size="6.8" fill="#e6e6e6" textLength="23.1" lengthAdjust="spacingAndGlyphs">0.92965</text>
<text x="993.2" y="215.15" font-size="6.8" fill="#e6e6e6" textLength="23.1" lengthAdjust="spacingAndGlyphs">0.92935</text>
<text x="993.2" y="240.83" font-size="6.8" fill="#e6e6e6" textLength="23.1" lengthAdjust="spacingAndGlyphs">0.92905</text>
<text x="993.2" y="266.51" font-size="6.8" fill="#e6e6e6" textLength="23.1" lengthAdjust="spacingAndGlyphs">0.92875</text>
<text x="993.2" y="292.19" font-size="6.8" fill="#e6e6e6" textLength="23.1" lengthAdjust="spacingAndGlyphs">0.92845</text>
<text x="993.2" y="317.87" font-size="6.8" fill="#e6e6e6" textLength="23.1" lengthAdjust="spacingAndGlyphs">0.92815</text>
<rect x="991.1" y="177.1" width="27.8" height="7.8" fill="#fff"/>
<text x="993.2" y="183.6" font-size="6.8" fill="#000" textLength="23.1" lengthAdjust="spacingAndGlyphs">0.92972</text>
<text x="3.77" y="329.6" font-size="6.9" fill="#e6e6e6" textLength="34.6" lengthAdjust="spacingAndGlyphs">16 Jan 2026</text>
<text x="49.49" y="329.6" font-size="6.9" fill="#e6e6e6" textLength="36.7" lengthAdjust="spacingAndGlyphs">16 Jan 17:15</text>
<text x="95.22" y="329.6" font-size="6.9" fill="#e6e6e6" textLength="36.7" lengthAdjust="spacingAndGlyphs">16 Jan 17:35</text>
<text x="140.94" y="329.6" font-size="6.9" fill="#e6e6e6" textLength="36.7" lengthAdjust="spacingAndGlyphs">16 Jan 17:55</text>
<text x="186.67" y="329.6" font-size="6.9" fill="#e6e6e6" textLength="36.7" lengthAdjust="spacingAndGlyphs">16 Jan 18:15</text>
<text x="232.39" y="329.6" font-size="6.9" fill="#e6e6e6" textLength="36.7" lengthAdjust="spacingAndGlyphs">16 Jan 18:35</text>
<text x="278.11" y="329.6" font-size="6.9" fill="#e6e6e6" textLength="36.7" lengthAdjust="spacingAndGlyphs">16 Jan 18:55</text>
<text x="323.84" y="329.6" font-size="6.9" fill="#e6e6e6" textLength="36.7" lengthAdjust="spacingAndGlyphs">16 Jan 19:15</text>
<text x="369.56" y="329.6" font-size="6.9" fill="#e6e6e6" textLength="36.7" lengthAdjust="spacingAndGlyphs">16 Jan 19:35</text>
<text x="415.29" y="329.6" font-size="6.9" fill="#e6e6e6" textLength="36.7" lengthAdjust="spacingAndGlyphs">16 Jan 19:55</text>
<text x="461.01" y="329.6" font-size="6.9" fill="#e6e6e6" textLength="36.7" lengthAdjust="spacingAndGlyphs">16 Jan 20:15</text>
<text x="506.73" y="329.6" font-size="6.9" fill="#e6e6e6" textLength="36.7" lengthAdjust="spacingAndGlyphs">16 Jan 20:35</text>
<text x="552.46" y="329.6" font-size="6.9" fill="#e6e6e6" textLength="36.7" lengthAdjust="spacingAndGlyphs">16 Jan 20:55</text>
<text x="598.18" y="329.6" font-size="6.9" fill="#e6e6e6" textLength="36.7" lengthAdjust="spacingAndGlyphs">16 Jan 21:15</text>
<text x="643.91" y="329.6" font-size="6.9" fill="#e6e6e6" textLength="36.7" lengthAdjust="spacingAndGlyphs">16 Jan 21:35</text>
<text x="689.63" y="329.6" font-size="6.9" fill="#e6e6e6" textLength="36.7" lengthAdjust="spacingAndGlyphs">16 Jan 21:55</text>
<text x="735.35" y="329.6" font-size="6.9" fill="#e6e6e6" textLength="36.7" lengthAdjust="spacingAndGlyphs">16 Jan 22:15</text>
<text x="781.08" y="329.6" font-size="6.9" fill="#e6e6e6" textLength="36.7" lengthAdjust="spacingAndGlyphs">16 Jan 22:35</text>
<text x="826.80" y="329.6" font-size="6.9" fill="#e6e6e6" textLength="36.7" lengthAdjust="spacingAndGlyphs">16 Jan 22:55</text>
<text x="872.53" y="329.6" font-size="6.9" fill="#e6e6e6" textLength="36.7" lengthAdjust="spacingAndGlyphs">16 Jan 23:15</text>
<text x="918.25" y="329.6" font-size="6.9" fill="#e6e6e6" textLength="36.7" lengthAdjust="spacingAndGlyphs">16 Jan 23:35</text>
<text x="963.97" y="329.6" font-size="6.9" fill="#e6e6e6" textLength="36.7" lengthAdjust="spacingAndGlyphs">16 Jan 23:55</text>
<path d="M6 83.1h5.2l-2.6 2.5z" fill="#fff"/>
<text x="15" y="86.3" font-size="6.9">AUDCAD,M5</text>
<text x="918.7" y="86.8" font-size="6.75">BALANCEA_Ver.S</text>
<text x="44" y="159.3" font-size="6.5" fill="#c8c8c8">sell 0.06</text>
</g>
<circle cx="981.6" cy="85.4" r="3.8" fill="#1c1c1c" stroke="#9a9a9a" stroke-width="1.1"/><path d="M979.4 86.5q2.2 2.9 4.4 0" stroke="#b0b0b0" stroke-width="0.8" fill="none"/>
<circle cx="980.5" cy="84.4" r="0.65" fill="#fff"/><circle cx="982.6" cy="84.4" r="0.65" fill="#fff"/>
</svg>
<div class="a" style="left:0;top:334.7px;width:1024px;height:201px;background:#f0f0f0"></div>
<div class="a" style="left:2px;top:348.6px;width:9.2px;height:166.6px;background:linear-gradient(#dbe6f2,#cfdded 40%,#bccfe4 85%)"></div>
<div class="a" style="left:11.4px;top:338.5px;width:1008.5px;height:161.2px;background:#fff"></div>
<div class="a" style="left:12px;top:371.5px;width:1007.9px;height:13.7px;background:#ececec"></div>
<div class="a" style="left:12px;top:399.3px;width:1007.9px;height:14.2px;background:#d0d0d0"></div>
<svg width="1024" height="201" viewBox="0 334.7 1024 201" style="position:absolute;left:0;top:334.7px">
<path d="M11.6 499.7V338.7H1019.9" stroke="#c4c4c4" stroke-width="0.8" fill="none"/>
<path d="M12 356.15H1019.9M12 371.1H1019.9M12 385.5H1019.9" stroke="#e2e2e2" stroke-width="0.8" fill="none"/>
<path d="M111.1 339.2V399.5 M248.9 339.2V399.5 M317.8 339.2V399.5 M371.3 339.2V399.5 M440.3 339.2V399.5 M516.3 339.2V399.5 M592.7 339.2V399.5 M669.7 339.2V399.5 M745.6 339.2V399.5 M822.2 339.2V399.5 M898.8 339.2V399.5 M1017.9 339.2V399.5" stroke="#dedede" stroke-width="0.9" fill="none"/>
<path d="M3.8 340.9l3.6 3.5M7.4 340.9l-3.6 3.5" stroke="#222" stroke-width="1.1"/>
<path d="M59.3 349.8l1.8-3.4" stroke="#888" stroke-width="0.6"/>
<path d="M14.8 359.29999999999995q0-.9.9-.9h4.4l2.2 2.2v6.4q0 .9-.9.9h-5.7q-.9 0-.9-.9z" fill="#fdfdfd" stroke="#777" stroke-width="0.8"/>
<path d="M20.1 358.4v2.2h2.2" fill="none" stroke="#777" stroke-width="0.6"/>
<circle cx="21.9" cy="366.5" r="2.3" fill="#e8471c" stroke="#a82a08" stroke-width="0.4"/>
<path d="M14.8 373.9q0-.9.9-.9h4.4l2.2 2.2v6.4q0 .9-.9.9h-5.7q-.9 0-.9-.9z" fill="#fdfdfd" stroke="#777" stroke-width="0.8"/>
<path d="M20.1 373.0v2.2h2.2" fill="none" stroke="#777" stroke-width="0.6"/>
<circle cx="21.9" cy="381.1" r="2.3" fill="#e8471c" stroke="#a82a08" stroke-width="0.4"/>
<path d="M14.8 388.4q0-.9.9-.9h4.4l2.2 2.2v6.4q0 .9-.9.9h-5.7q-.9 0-.9-.9z" fill="#fdfdfd" stroke="#777" stroke-width="0.8"/>
<path d="M20.1 387.5v2.2h2.2" fill="none" stroke="#777" stroke-width="0.6"/>
<circle cx="21.9" cy="395.6" r="2.3" fill="#2f9be8" stroke="#1668b8" stroke-width="0.4"/>
<rect x="14.6" y="401.6" width="7.6" height="9.6" rx="0.8" fill="#fff" stroke="#8a8a8a" stroke-width="0.7"/>
<path d="M18.4 403.6v5.6M16.6 406l1.8 3.2 1.8-3.2z" fill="#e04a18" stroke="#e04a18" stroke-width="0.9"/>
<path d="M1010.9 362.09999999999997l4.2 4.2M1015.1 362.09999999999997l-4.2 4.2" stroke="#8a8a8a" stroke-width="1.05"/>
<path d="M1010.9 376.5l4.2 4.2M1015.1 376.5l-4.2 4.2" stroke="#8a8a8a" stroke-width="1.05"/>
<path d="M1010.9 390.79999999999995l4.2 4.2M1015.1 390.79999999999995l-4.2 4.2" stroke="#8a8a8a" stroke-width="1.05"/>
<path d="M11.4 499.4H1019.9" stroke="#303030" stroke-width="1"/>
<path d="M14.2 499.2V513H44.7V499.9" fill="#fff" stroke="#444" stroke-width="0.9"/>
<path d="M14.7 499.7H44.2" stroke="#fff" stroke-width="1.4"/>
<path d="M93.5 502.3V511.9 M142.2 502.3V511.9 M181 502.3V511.9 M236.5 502.3V511.9 M300.5 502.3V511.9 M356.2 502.3V511.9 M392.6 502.3V511.9 M437 502.3V511.9 M489.4 502.3V511.9 M537.2 502.3V511.9" stroke="#9c9c9c" stroke-width="1.3"/>
<path d="M0 517.2H1024" stroke="#c8c8c8" stroke-width="0.9"/><path d="M0 518H1024" stroke="#fbfbfb" stroke-width="0.7"/>
<path d="M515.7 520V532.6 M598.5 520V532.6 M671.3 520V532.6 M721.4 520V532.6 M772.2 520V532.6 M821.3 520V532.6 M870.7 520V532.6 M917.5 520V532.6" stroke="#c2c2c2" stroke-width="0.9"/>
<path d="M922.50 531.9V522.0" stroke="#8aa838" stroke-width="1.15"/>
<path d="M922.50 531.9V528.30" stroke="#2b5f9e" stroke-width="1.15"/>
<path d="M924.40 531.9V522.0" stroke="#8aa838" stroke-width="1.15"/>
<path d="M924.40 531.9V527.55" stroke="#2b5f9e" stroke-width="1.15"/>
<path d="M926.30 531.9V522.0" stroke="#8aa838" stroke-width="1.15"/>
<path d="M926.30 531.9V526.80" stroke="#2b5f9e" stroke-width="1.15"/>
<path d="M928.20 531.9V522.0" stroke="#8aa838" stroke-width="1.15"/>
<path d="M928.20 531.9V526.05" stroke="#2b5f9e" stroke-width="1.15"/>
<path d="M930.10 531.9V522.0" stroke="#8aa838" stroke-width="1.15"/>
<path d="M930.10 531.9V525.30" stroke="#2b5f9e" stroke-width="1.15"/>
<path d="M932.00 531.9V522.0" stroke="#8aa838" stroke-width="1.15"/>
<path d="M932.00 531.9V524.55" stroke="#2b5f9e" stroke-width="1.15"/>
<path d="M933.90 531.9V522.0" stroke="#8aa838" stroke-width="1.15"/>
<path d="M933.90 531.9V523.80" stroke="#2b5f9e" stroke-width="1.15"/>
<path d="M935.80 531.9V522.0" stroke="#8aa838" stroke-width="1.15"/>
<path d="M935.80 531.9V523.05" stroke="#2b5f9e" stroke-width="1.15"/>
<path d="M937.70 531.9V522.0" stroke="#8aa838" stroke-width="1.15"/>
<path d="M937.70 531.9V522.30" stroke="#2b5f9e" stroke-width="1.15"/>
<path d="M1014 533.5l8.5-8.5M1016.6 533.5l5.9-5.9M1019.2 533.5l3.3-3.3" stroke="#b0b0b0" stroke-width="0.8"/>
</svg>
<div class="t" id="t20" style="font-size:8.9px;color:#222;top:343.15px;left:17.00px;transform-origin:0 50%;transform:scaleX(0.9408);">注文番号</div>
<div class="t" id="t21" style="font-size:8.9px;color:#222;top:343.15px;right:778.90px;transform-origin:100% 50%;transform:scaleX(0.9577);">時間</div>
<div class="t" id="t22" style="font-size:8.9px;color:#222;top:343.15px;right:709.90px;transform-origin:100% 50%;transform:scaleX(0.9408);">取引種別</div>
<div class="t" id="t23" style="font-size:8.9px;color:#222;top:343.15px;right:657.00px;transform-origin:100% 50%;transform:scaleX(0.9577);">数量</div>
<div class="t" id="t24" style="font-size:8.9px;color:#222;top:343.15px;right:587.00px;transform-origin:100% 50%;transform:scaleX(0.8873);">通貨ペア</div>
<div class="t" id="t25" style="font-size:8.9px;color:#222;top:343.15px;right:511.00px;transform-origin:100% 50%;transform:scaleX(0.9577);">価格</div>
<div class="t" id="t26" style="font-size:8.9px;color:#222;top:343.15px;right:434.70px;transform-origin:100% 50%;transform:scaleX(0.9433);">決済逆指値(S/L)</div>
<div class="t" id="t27" style="font-size:8.9px;color:#222;top:343.15px;right:358.00px;transform-origin:100% 50%;transform:scaleX(0.9363);">決済指値(T/P)</div>
<div class="t" id="t28" style="font-size:8.9px;color:#222;top:343.15px;right:281.00px;transform-origin:100% 50%;transform:scaleX(0.9577);">価格</div>
<div class="t" id="t29" style="font-size:8.9px;color:#222;top:343.15px;right:205.00px;transform-origin:100% 50%;transform:scaleX(0.9390);">手数料</div>
<div class="t" id="t30" style="font-size:8.9px;color:#222;top:343.15px;right:128.30px;transform-origin:100% 50%;transform:scaleX(0.6873);">スワップ</div>
<div class="t" id="t31" style="font-size:8.9px;color:#222;top:343.15px;right:8.40px;transform-origin:100% 50%;transform:scaleX(0.9577);">損益</div>
<div class="t" id="t32" style="font-size:8.2px;color:#222;top:361.10px;right:776.70px;transform-origin:100% 50%;transform:scaleX(0.9371);">2026.01.14 15:20:00</div>
<div class="t" id="t33" style="font-size:8.2px;color:#222;top:361.10px;right:708.60px;transform-origin:100% 50%;transform:scaleX(0.9433);">sell</div>
<div class="t" id="t34" style="font-size:8.2px;color:#222;top:361.10px;right:654.30px;transform-origin:100% 50%;transform:scaleX(0.9663);">0.04</div>
<div class="t" id="t35" style="font-size:8.2px;color:#222;top:361.10px;right:586.00px;transform-origin:100% 50%;transform:scaleX(1.0158);">audcad</div>
<div class="t" id="t36" style="font-size:8.2px;color:#222;top:361.10px;right:509.30px;transform-origin:100% 50%;transform:scaleX(0.9456);">0.92626</div>
<div class="t" id="t37" style="font-size:8.2px;color:#222;top:361.10px;right:432.70px;transform-origin:100% 50%;transform:scaleX(0.9456);">0.00000</div>
<div class="t" id="t38" style="font-size:8.2px;color:#222;top:361.10px;right:356.00px;transform-origin:100% 50%;transform:scaleX(0.9456);">0.00000</div>
<div class="t" id="t39" style="font-size:8.2px;color:#222;top:361.10px;right:280.00px;transform-origin:100% 50%;transform:scaleX(0.9456);">0.93048</div>
<div class="t" id="t40" style="font-size:8.2px;color:#222;top:361.10px;right:204.30px;transform-origin:100% 50%;transform:scaleX(0.9425);">0</div>
<div class="t" id="t41" style="font-size:8.2px;color:#222;top:361.10px;right:127.70px;transform-origin:100% 50%;transform:scaleX(0.9518);">-175</div>
<div class="t" id="t42" style="font-size:8.2px;color:#222;top:361.10px;right:20.30px;transform-origin:100% 50%;transform:scaleX(0.9734);">-1 918</div>
<div class="t" id="t43" style="font-size:8.2px;color:#222;top:375.50px;right:776.70px;transform-origin:100% 50%;transform:scaleX(0.9371);">2026.01.15 10:37:29</div>
<div class="t" id="t44" style="font-size:8.2px;color:#222;top:375.50px;right:708.60px;transform-origin:100% 50%;transform:scaleX(0.9433);">sell</div>
<div class="t" id="t45" style="font-size:8.2px;color:#222;top:375.50px;right:654.30px;transform-origin:100% 50%;transform:scaleX(0.9663);">0.06</div>
<div class="t" id="t46" style="font-size:8.2px;color:#222;top:375.50px;right:586.00px;transform-origin:100% 50%;transform:scaleX(1.0158);">audcad</div>
<div class="t" id="t47" style="font-size:8.2px;color:#222;top:375.50px;right:509.30px;transform-origin:100% 50%;transform:scaleX(0.9456);">0.92995</div>
<div class="t" id="t48" style="font-size:8.2px;color:#222;top:375.50px;right:432.70px;transform-origin:100% 50%;transform:scaleX(0.9456);">0.00000</div>
<div class="t" id="t49" style="font-size:8.2px;color:#222;top:375.50px;right:356.00px;transform-origin:100% 50%;transform:scaleX(0.9456);">0.00000</div>
<div class="t" id="t50" style="font-size:8.2px;color:#222;top:375.50px;right:280.00px;transform-origin:100% 50%;transform:scaleX(0.9456);">0.93048</div>
<div class="t" id="t51" style="font-size:8.2px;color:#222;top:375.50px;right:204.30px;transform-origin:100% 50%;transform:scaleX(0.9425);">0</div>
<div class="t" id="t52" style="font-size:8.2px;color:#222;top:375.50px;right:127.70px;transform-origin:100% 50%;transform:scaleX(0.9518);">-104</div>
<div class="t" id="t53" style="font-size:8.2px;color:#222;top:375.50px;right:20.30px;transform-origin:100% 50%;transform:scaleX(1.0006);">-362</div>
<div class="t" id="t54" style="font-size:8.2px;color:#222;top:389.80px;right:776.70px;transform-origin:100% 50%;transform:scaleX(0.9448);">2026.01.15 11:10:47</div>
<div class="t" id="t55" style="font-size:8.2px;color:#222;top:389.80px;right:708.60px;transform-origin:100% 50%;transform:scaleX(1.0452);">buy</div>
<div class="t" id="t56" style="font-size:8.2px;color:#222;top:389.80px;right:654.30px;transform-origin:100% 50%;transform:scaleX(0.9663);">0.04</div>
<div class="t" id="t57" style="font-size:8.2px;color:#222;top:389.80px;right:586.00px;transform-origin:100% 50%;transform:scaleX(1.0158);">audcad</div>
<div class="t" id="t58" style="font-size:8.2px;color:#222;top:389.80px;right:509.30px;transform-origin:100% 50%;transform:scaleX(0.9456);">0.93101</div>
<div class="t" id="t59" style="font-size:8.2px;color:#222;top:389.80px;right:432.70px;transform-origin:100% 50%;transform:scaleX(0.9456);">0.00000</div>
<div class="t" id="t60" style="font-size:8.2px;color:#222;top:389.80px;right:356.00px;transform-origin:100% 50%;transform:scaleX(0.9456);">0.00000</div>
<div class="t" id="t61" style="font-size:8.2px;color:#222;top:389.80px;right:280.00px;transform-origin:100% 50%;transform:scaleX(0.9456);">0.92972</div>
<div class="t" id="t62" style="font-size:8.2px;color:#222;top:389.80px;right:204.30px;transform-origin:100% 50%;transform:scaleX(0.9425);">0</div>
<div class="t" id="t63" style="font-size:8.2px;color:#222;top:389.80px;right:127.70px;transform-origin:100% 50%;transform:scaleX(0.9541);">-12</div>
<div class="t" id="t64" style="font-size:8.2px;color:#222;top:389.80px;right:20.30px;transform-origin:100% 50%;transform:scaleX(1.0006);">-586</div>
<div class="t" id="t65" style="font-size:8.3px;color:#111;top:402.95px;left:28.30px;transform-origin:0 50%;transform:scaleX(0.9600);font-weight:bold;">残高: 1 088 089 JPY</div>
<div class="t" id="t66" style="font-size:8.3px;color:#111;top:402.95px;left:108.40px;transform-origin:0 50%;transform:scaleX(1.0016);font-weight:bold;">有効証拠金: 1 084 932</div>
<div class="t" id="t67" style="font-size:8.3px;color:#111;top:402.95px;left:197.10px;transform-origin:0 50%;transform:scaleX(1.0032);font-weight:bold;">必要証拠金: 637</div>
<div class="t" id="t68" style="font-size:8.3px;color:#111;top:402.95px;left:263.30px;transform-origin:0 50%;transform:scaleX(1.0028);font-weight:bold;">余剰証拠金: 1 084 295</div>
<div class="t" id="t69" style="font-size:8.3px;color:#111;top:402.95px;left:352.00px;transform-origin:0 50%;transform:scaleX(0.9926);font-weight:bold;">証拠金維持率: 170319.00%</div>
<div class="t" id="t70" style="font-size:8.3px;color:#111;top:402.95px;right:20.30px;transform-origin:100% 50%;transform:scaleX(0.9987);font-weight:bold;">-3 157</div>
<div class="t" id="t71" style="font-size:8.4px;color:#000;top:501.80px;left:20.90px;transform-origin:0 50%;transform:scaleX(0.9672);">取引</div>
<div class="t" id="t72" style="font-size:8.4px;color:#777;top:501.80px;left:52.60px;transform-origin:0 50%;transform:scaleX(0.9970);">運用比率</div>
<div class="t" id="t73" style="font-size:8.4px;color:#777;top:501.80px;left:101.80px;transform-origin:0 50%;transform:scaleX(0.9731);">口座履歴</div>
<div class="t" id="t74" style="font-size:8.4px;color:#777;top:501.80px;left:149.60px;transform-origin:0 50%;transform:scaleX(0.7282);">ニュース</div>
<div class="t" id="t75" style="font-size:8.4px;color:#777;top:501.80px;left:187.70px;transform-origin:0 50%;transform:scaleX(0.8220);">アラーム設定</div>
<div class="t" id="t76" style="font-size:8.4px;color:#777;top:501.80px;left:243.80px;transform-origin:0 50%;transform:scaleX(0.7435);">メールボックス</div>
<div class="t" id="t77" style="font-size:8.4px;color:#777;top:501.80px;left:307.40px;transform-origin:0 50%;transform:scaleX(0.7021);">マーケット</div>
<div class="t" id="t78" style="font-size:8.4px;color:#777;top:501.80px;left:363.50px;transform-origin:0 50%;transform:scaleX(0.9552);">記事</div>
<div class="t" id="t79" style="font-size:8.4px;color:#777;top:501.80px;left:399.60px;transform-origin:0 50%;transform:scaleX(0.6925);">ライブラリ</div>
<div class="t" id="t80" style="font-size:8.4px;color:#777;top:501.80px;left:443.70px;transform-origin:0 50%;transform:scaleX(0.7540);">エキスパート</div>
<div class="t" id="t81" style="font-size:8.4px;color:#777;top:501.80px;left:496.40px;transform-origin:0 50%;transform:scaleX(0.9970);">操作履歴</div>
<div class="t" id="t82" style="font-size:6.3px;color:#e81818;top:506.65px;left:289.10px;transform-origin:0 50%;transform:scaleX(1.1093);font-weight:bold;">6</div>
<div class="t" id="t83" style="font-size:6.3px;color:#e81818;top:506.65px;left:339.10px;transform-origin:0 50%;transform:scaleX(0.8749);font-weight:bold;">105</div>
<div class="t" id="t84" style="font-size:6.3px;color:#e81818;top:506.65px;left:381.70px;transform-origin:0 50%;transform:scaleX(0.9671);font-weight:bold;">9</div>
<div class="t" style="left:2.5px;top:514.6px;font-size:9.2px;color:#1a1a1a;transform-origin:0 0;transform:rotate(-90deg) scaleX(0.715)">ターミナル</div>
<div class="t" id="t85" style="font-size:8.4px;color:#111;top:522.90px;left:2.50px;transform-origin:0 50%;transform:scaleX(0.8345);">F1キーでヘルプが表示されます</div>
<div class="t" id="t86" style="font-size:8.2px;color:#111;top:523.00px;left:519.80px;transform-origin:0 50%;transform:scaleX(1.0403);">Default</div>
<div class="t" id="t87" style="font-size:8.2px;color:#111;top:523.00px;left:940.80px;transform-origin:0 50%;transform:scaleX(0.9764);">1493708/1308 kb</div>
<svg width="1024" height="535" viewBox="0 0 1024 535" style="position:absolute;left:0;top:0;pointer-events:none"><path d="M1.45 75.5V334.6" stroke="#9a9a9a" stroke-width="1.1"/><path d="M1022.6 75.5V334.6" stroke="#f4f4f4" stroke-width="0.9"/><rect x="0" y="0" width="0.92" height="535" fill="#4b5b6e"/><rect x="1023.05" y="0" width="1" height="535" fill="#52647a"/><rect x="0" y="0" width="1024" height="0.9" fill="#4b5b6e"/><rect x="0" y="534.1" width="1024" height="0.9" fill="#4b5b6e"/></svg>
</div></body></html>
